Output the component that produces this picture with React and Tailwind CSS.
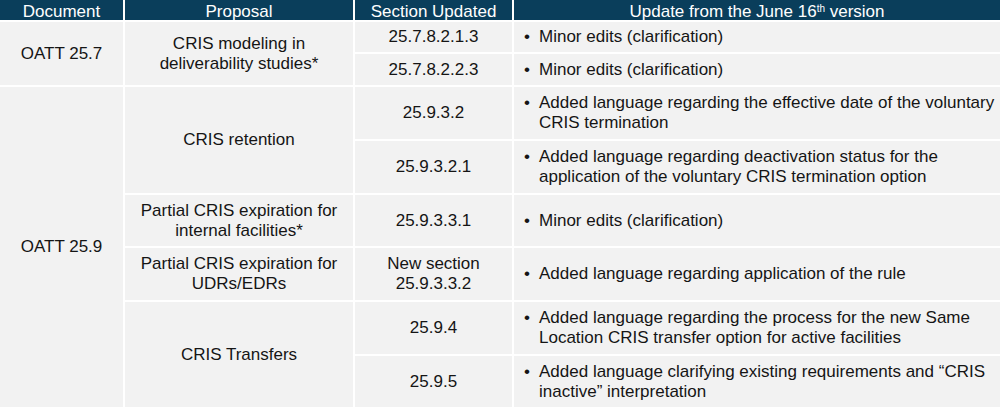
const font = { fontFamily: '"Liberation Sans", Arial, sans-serif' }

function Head({ children }) {
  return (
    <div className="bg-[#0a3e5b] text-white text-[17px] leading-[20px] flex items-end justify-center whitespace-nowrap overflow-hidden">
      <span className="translate-y-[2px]">{children}</span>
    </div>
  )
}

function Cell({ className = '', children }) {
  return (
    <div className={`bg-[#f2f2f2] text-[#151515] text-[17px] leading-[20px] flex items-center justify-center text-center ${className}`}>
      <div>{children}</div>
    </div>
  )
}

function Bullet({ className = '', children }) {
  return (
    <div className={`bg-[#f2f2f2] text-[#151515] text-[17px] leading-[20px] flex items-center pl-[10px] ${className}`}>
      <div className="flex whitespace-nowrap">
        <span className="w-[15px] shrink-0">•</span>
        <span>{children}</span>
      </div>
    </div>
  )
}

export default function App() {
  return (
    <div className="w-[1000px] h-[407px] bg-white overflow-hidden" style={font}>
      <div className="grid grid-cols-[123px_228px_157px_486px] grid-rows-[20px_30px_31px_52px_52px_51px_52px_52px_51px] gap-[2px] h-full">
        <Head>Document</Head>
        <Head>Proposal</Head>
        <Head>Section Updated</Head>
        <Head>
          Update from the June 16<sup className="text-[10px] leading-none">th</sup> version
        </Head>

        {/* OATT 25.7 */}
        <Cell className="col-start-1 row-start-2 row-span-2">OATT 25.7</Cell>
        <Cell className="col-start-2 row-start-2 row-span-2">
          CRIS modeling in
          <br />
          deliverability studies*
        </Cell>
        <Cell className="col-start-3 row-start-2">25.7.8.2.1.3</Cell>
        <Bullet className="col-start-4 row-start-2">Minor edits (clarification)</Bullet>
        <Cell className="col-start-3 row-start-3">25.7.8.2.2.3</Cell>
        <Bullet className="col-start-4 row-start-3">Minor edits (clarification)</Bullet>

        {/* OATT 25.9 */}
        <Cell className="col-start-1 row-start-4 row-span-6">OATT 25.9</Cell>
        <Cell className="col-start-2 row-start-4 row-span-2">CRIS retention</Cell>
        <Cell className="col-start-3 row-start-4">25.9.3.2</Cell>
        <Bullet className="col-start-4 row-start-4">
          Added language regarding the effective date of the voluntary
          <br />
          CRIS termination
        </Bullet>
        <Cell className="col-start-3 row-start-5">25.9.3.2.1</Cell>
        <Bullet className="col-start-4 row-start-5">
          Added language regarding deactivation status for the
          <br />
          application of the voluntary CRIS termination option
        </Bullet>

        <Cell className="col-start-2 row-start-6">
          Partial CRIS expiration for
          <br />
          internal facilities*
        </Cell>
        <Cell className="col-start-3 row-start-6">25.9.3.3.1</Cell>
        <Bullet className="col-start-4 row-start-6">Minor edits (clarification)</Bullet>

        <Cell className="col-start-2 row-start-7">
          Partial CRIS expiration for
          <br />
          UDRs/EDRs
        </Cell>
        <Cell className="col-start-3 row-start-7">
          New section
          <br />
          25.9.3.3.2
        </Cell>
        <Bullet className="col-start-4 row-start-7">Added language regarding application of the rule</Bullet>

        <Cell className="col-start-2 row-start-8 row-span-2">CRIS Transfers</Cell>
        <Cell className="col-start-3 row-start-8">25.9.4</Cell>
        <Bullet className="col-start-4 row-start-8">
          Added language regarding the process for the new Same
          <br />
          Location CRIS transfer option for active facilities
        </Bullet>
        <Cell className="col-start-3 row-start-9">25.9.5</Cell>
        <Bullet className="col-start-4 row-start-9">
          Added language clarifying existing requirements and “CRIS
          <br />
          inactive” interpretation
        </Bullet>
      </div>
    </div>
  )
}
